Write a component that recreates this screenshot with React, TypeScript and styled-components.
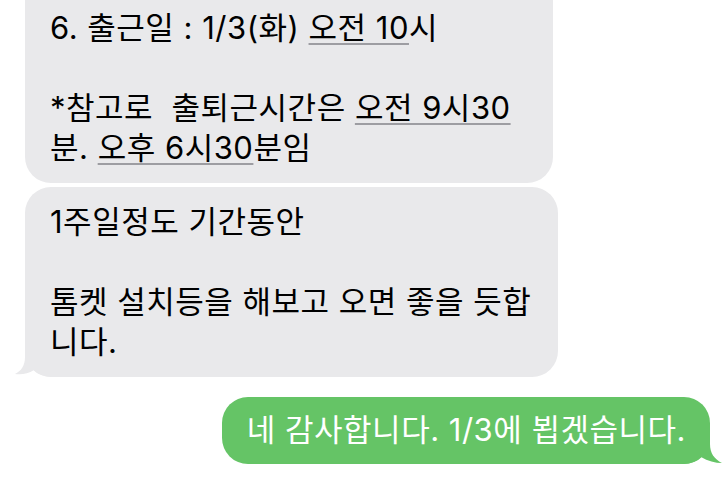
import React from "react";
import styled, { createGlobalStyle } from "styled-components";

const GlobalStyle = createGlobalStyle`
  html, body { margin: 0; padding: 0; background: #ffffff; }
  body {
    font-family: "Inter", "Noto Sans CJK KR", "Noto Sans", sans-serif;
    -webkit-font-smoothing: antialiased;
  }
`;

const Thread = styled.div`
  display: flex;
  flex-direction: column;
  padding: 0 16px 0 25px;
  width: 726px;
  height: 482px;
  box-sizing: border-box;
  overflow: hidden;
`;

const Bubble = styled.div<{ $out?: boolean; $width?: number; $clipped?: boolean; $gap?: number }>`
  position: relative;
  box-sizing: border-box;
  align-self: ${(p) => (p.$out ? "flex-end" : "flex-start")};
  width: ${(p) => (p.$width ? `${p.$width}px` : "auto")};
  margin-top: ${(p) => p.$gap ?? 0}px;
  padding: ${(p) => (p.$clipped ? "8px 25px 15px" : p.$out ? "13px 24px 14px 25px" : "15px 25px")};
  background: ${(p) => (p.$out ? "#65c466" : "#e9e9eb")};
  color: ${(p) => (p.$out ? "#ffffff" : "#000000")};
  border-radius: ${(p) => (p.$clipped ? "0 0 26px 26px" : "26px")};
  font-size: 31px;
  line-height: 40px;
  letter-spacing: 0.5px;
`;

const Line = styled.div`
  height: 40px;
  white-space: pre;
  position: relative;
  z-index: 1;
`;

const Detected = styled.span`
  text-decoration: underline;
  text-decoration-color: #9d9da2;
  text-decoration-thickness: 2px;
  text-underline-offset: 4px;
`;

const Tail = styled.svg<{ $side: "left" | "right" }>`
  position: absolute;
  bottom: 0;
  ${(p) => (p.$side === "left" ? "left: -12px;" : "right: -14px;")}
  width: 42px;
  height: 32px;
  z-index: 0;
`;

const LeftTail = ({ color }: { color: string }) => (
  <Tail $side="left" viewBox="-12 -32 42 32">
    <path
      d="M0 -32 L0 -20 C0 -11 -4 -6 -10 -3 C-4 -2 3 -3 9 -7 C13 -3 19 0 30 0 L30 -32 Z"
      fill={color}
    />
  </Tail>
);

const RightTail = ({ color }: { color: string }) => (
  <Tail $side="right" viewBox="-28 -32 42 32">
    <path
      d="M0 -32 L0 -20 C0 -11 4 -5 12 -1 C5 -1 -2 -3 -9 -7 C-13 -3 -19 0 -28 0 L-28 -32 Z"
      fill={color}
    />
  </Tail>
);

export default function App() {
  return (
    <>
      <GlobalStyle />
      <Thread>
        <Bubble $width={528} $clipped>
          <Line>
            6. 출근일 : 1/3(화) <Detected>오전 10</Detected>시
          </Line>
          <Line> </Line>
          <Line>
            *참고로  출퇴근시간은 <Detected>오전 9시30</Detected>
          </Line>
          <Line>
            분. <Detected>오후 6시30</Detected>분임
          </Line>
        </Bubble>
        <Bubble $width={533} $gap={4}>
          <Line>1주일정도 기간동안</Line>
          <Line> </Line>
          <Line>톰켓 설치등을 해보고 오면 좋을 듯합</Line>
          <Line>니다.</Line>
          <LeftTail color="#e9e9eb" />
        </Bubble>
        <Bubble $out $gap={20}>
          <Line>네 감사합니다. 1/3에 뵙겠습니다.</Line>
          <RightTail color="#65c466" />
        </Bubble>
      </Thread>
    </>
  );
}
